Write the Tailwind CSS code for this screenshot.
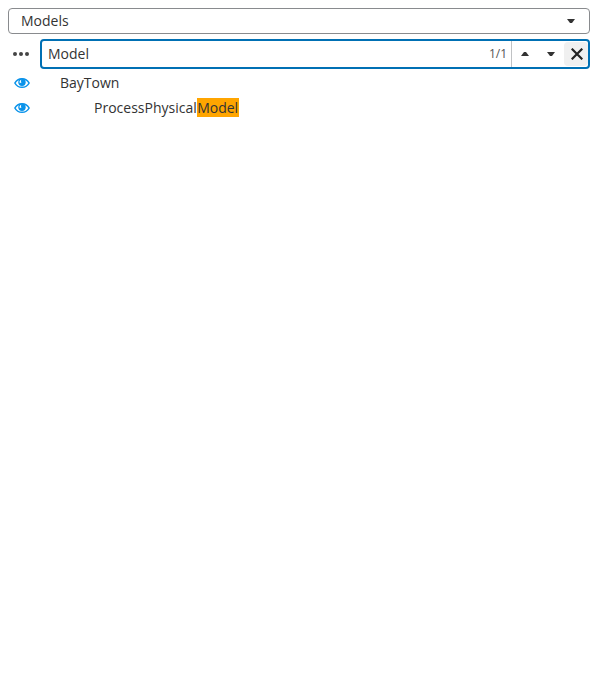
<!DOCTYPE html>
<html lang="en">
<head>
<meta charset="utf-8">
<title>Models</title>
<script src="https://cdn.jsdelivr.net/npm/@tailwindcss/browser@4"></script>
</head>
<body class="bg-white px-2 pt-2 text-[14px] leading-[19px] text-[#333] font-['Open_Sans','Noto_Sans',sans-serif]">
<svg class="hidden">
  <symbol id="eye" viewBox="0 0 16 16">
    <path d="M8 3.700C5 3.700 2.300 5.300.9 8c1.400 2.700 4.100 4.300 7.100 4.300s5.700-1.600 7.100-4.300C13.700 5.300 11 3.700 8 3.700z" fill="none" stroke="#0a93ea" stroke-width="1.600"/>
    <circle cx="8" cy="7.300" r="3.700" fill="#0a93ea"/>
    <path d="M7.400 4.800C5.800 5.200 5 6.800 5.900 8.200c.4-.5 1-.7 1.600-.7-.7-.8-.7-1.900-.1-2.700z" fill="#fff"/>
  </symbol>
</svg>
<div class="flex h-[26px] items-center justify-between rounded border border-[#898b8e] pl-3 pr-[14px]">
  <span class="pb-0.5">Models</span>
  <svg class="h-2 w-2" viewBox="0 0 8 8" fill="#333"><path d="M0 2h8L5 6H3z"/></svg>
</div>
<div class="mt-[5px] flex h-[30px]">
  <div class="flex w-8 items-center pl-[5px]">
    <svg class="h-4 w-4" viewBox="0 0 16 16" fill="#444"><circle cx="2" cy="8" r="2"/><circle cx="8" cy="8" r="2"/><circle cx="14" cy="8" r="2"/></svg>
  </div>
  <div class="flex flex-1 rounded border-2 border-[#0070b4]">
    <div class="flex flex-1 items-center justify-between border-r border-[#c0c2c4] pb-px pl-1.5 pr-1">
      <span>Model</span><span class="text-[12px] text-[#555]">1/1</span>
    </div>
    <div class="flex w-[26px] items-center justify-center"><svg class="h-2 w-2" viewBox="0 0 8 8" fill="#333"><path d="M3 2h2l3 4H0z"/></svg></div>
    <div class="flex w-[26px] items-center justify-center"><svg class="h-2 w-2" viewBox="0 0 8 8" fill="#333"><path d="M0 2h8L5 6H3z"/></svg></div>
    <div class="my-px flex w-6 items-center justify-center rounded bg-[#f0f0f0] pl-0.5"><svg class="h-3 w-3" viewBox="0 0 12 12" stroke="#222" stroke-width="2.200"><path d="M.7.7l10.600 10.600M11.300.7L.7 11.300"/></svg></div>
  </div>
</div>
<div class="mt-px">
  <div class="flex h-[25px] items-center pl-1.5"><svg class="mr-[30px] h-4 w-4"><use href="#eye"/></svg><span>BayTown</span></div>
  <div class="flex h-[25px] items-center pl-1.5"><svg class="mr-16 h-4 w-4"><use href="#eye"/></svg><span>ProcessPhysical<mark class="ml-[0.4px] bg-[#ffa500] pr-[0.6px] text-[#333]">Model</mark></span></div>
</div>
</body>
</html>
